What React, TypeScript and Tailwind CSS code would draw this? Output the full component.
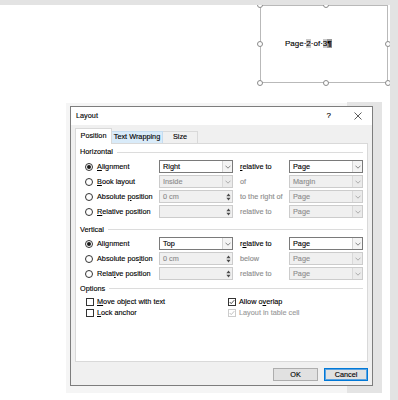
import type { ReactNode } from 'react';

const font = "font-['Liberation_Sans',Arial,sans-serif]";

function Chevron({ dim }: { dim?: boolean }) {
  return (
    <svg width="6" height="4" viewBox="0 0 6 4">
      <path d="M0.5 0.7 L3 3.2 L5.5 0.7" fill="none" stroke={dim ? '#9a9a9a' : '#6a6a6a'} strokeWidth="0.8" />
    </svg>
  );
}

function Spin() {
  return (
    <svg width="5" height="8" viewBox="0 0 5 8">
      <path d="M2.5 0.6 L4.6 3.2 L0.4 3.2 Z" fill="#4a4a4a" />
      <path d="M0.4 4.8 L4.6 4.8 L2.5 7.4 Z" fill="#4a4a4a" />
    </svg>
  );
}

function Radio({ on }: { on?: boolean }) {
  return (
    <span className="flex h-[8px] w-[8px] shrink-0 items-center justify-center rounded-full border border-[#333333] bg-white">
      {on && <span className="h-[4px] w-[4px] rounded-full bg-[#1a1a1a]" />}
    </span>
  );
}

function Field({ value, on, spin }: { value: string; on?: boolean; spin?: boolean }) {
  return (
    <div
      className={`flex h-[13px] w-[74px] shrink-0 border ${
        on ? 'border-[#7a7a7a] bg-white text-black' : 'border-[#cccccc] bg-[#f0f0f0] text-[#8c8c8c]'
      }`}
    >
      <span className="flex flex-1 items-center pl-[3px] leading-none">{value}</span>
      {spin ? (
        <span className="flex w-[8px] items-center justify-center">
          <Spin />
        </span>
      ) : (
        <span
          className={`flex w-[10px] items-center justify-center border-l ${
            on ? 'border-[#d4d4d4] bg-[#f4f4f4]' : 'border-[#d9d9d9] bg-[#ebebeb]'
          }`}
        >
          <Chevron dim={!on} />
        </span>
      )}
    </div>
  );
}

type RowProps = {
  on?: boolean;
  label: ReactNode;
  value: string;
  valueOn?: boolean;
  spin?: boolean;
  rel: ReactNode;
  relOn?: boolean;
  target: string;
  targetOn?: boolean;
};

function Row({ on, label, value, valueOn, spin, rel, relOn, target, targetOn }: RowProps) {
  return (
    <div className="flex h-[15px] items-center">
      <div className="flex w-[83px] items-center gap-[4px] pl-[9px] text-black">
        <Radio on={on} />
        <span className="whitespace-nowrap leading-none">{label}</span>
      </div>
      <Field value={value} on={valueOn} spin={spin} />
      <span className={`w-[56px] whitespace-nowrap pl-[7px] leading-none ${relOn ? 'text-black' : 'text-[#8c8c8c]'}`}>
        {rel}
      </span>
      <Field value={target} on={targetOn} />
    </div>
  );
}

function Group({ title, className }: { title: string; className: string }) {
  return (
    <div className={`flex items-center pl-[4px] pr-[4px] ${className}`}>
      <span className="leading-none text-black">{title}</span>
      <span className="ml-[4px] h-px flex-1 bg-[#dcdcdc]" />
    </div>
  );
}

function Check({ on, dim, label }: { on?: boolean; dim?: boolean; label: ReactNode }) {
  return (
    <div className={`flex items-center gap-[3px] ${dim ? 'text-[#9a9a9a]' : 'text-black'}`}>
      <span
        className={`flex h-[8px] w-[8px] shrink-0 items-center justify-center border bg-white ${
          dim ? 'border-[#cccccc]' : 'border-[#333333]'
        }`}
      >
        {on && (
          <svg width="7" height="6" viewBox="0 0 7 6">
            <path d="M0.8 3 L2.6 4.9 L6.2 0.8" fill="none" stroke={dim ? '#b0b0b0' : '#222'} strokeWidth="0.9" />
          </svg>
        )}
      </span>
      <span className="whitespace-nowrap leading-none">{label}</span>
    </div>
  );
}

const U = ({ children }: { children: ReactNode }) => <span className="underline underline-offset-1">{children}</span>;

function Handle({ x, y }: { x: number; y: number }) {
  return (
    <span
      className="absolute h-[6px] w-[6px] rounded-full border border-[#8a8a8a] bg-white"
      style={{ left: x - 3, top: y - 3 }}
    />
  );
}

export default function App() {
  return (
    <div className={`relative h-[400px] w-[398px] overflow-hidden bg-white text-[7.3px] [-webkit-text-stroke:0.12px] ${font}`}>
      {/* text box on page */}
      <div className="absolute left-[260px] top-[5px] flex h-[78px] w-[128px] items-center border border-[#b9b9b9] pl-[24px] pb-[1px] text-[8px] text-black">
        <span className="leading-none">
          Page·<span className="bg-[#c8c8c8]">2</span>·of·<span className="bg-[#c8c8c8]">3</span>
          <span className="bg-[#9a9a9a] font-bold">¶</span>
        </span>
      </div>
      <Handle x={260} y={5} />
      <Handle x={326} y={5} />
      <Handle x={260} y={44} />
      <Handle x={388} y={44} />
      <Handle x={260} y={83} />
      <Handle x={326} y={83} />
      <Handle x={388} y={83} />
      <span className="absolute left-[66px] top-[194px] h-[6px] w-[6px] rounded-full border border-[#4aa3c8] bg-white" />

      {/* window chrome around the page */}
      <div className="absolute inset-x-0 top-0 z-20 h-[5px] bg-[#e3e3e3]" />
      <div className="absolute bottom-0 right-0 top-0 z-20 w-[8px] bg-[#e3e3e3]" />

      {/* dialog shadow */}
      <div className="absolute left-[66px] top-[103px] h-[290px] w-[316px] bg-[#f5f5f5]" />
      <div className="absolute left-[347px] top-[102px] h-[291px] w-[35px] bg-[#e4e4e4]" />

      {/* Layout dialog */}
      <div className="absolute left-[70px] top-[106px] z-10 flex h-[280px] w-[303px] flex-col border border-[#7d7d7d] bg-[#f0f0f0]">
        <div className="flex h-[18px] shrink-0 items-center bg-white pl-[5px] pr-[10px] text-black">
          <span className="flex-1 leading-none">Layout</span>
          <span className="mr-[23px] text-[8px] leading-none">?</span>
          <svg width="8" height="8" viewBox="0 0 8 8">
            <path d="M0.5 0.5 L7.5 7.5 M7.5 0.5 L0.5 7.5" stroke="#333" strokeWidth="0.8" />
          </svg>
        </div>

        <div className="flex flex-1 flex-col px-[4px] pt-[3px]">
          <div className="flex h-[15px] items-end">
            <div className="relative z-10 -mb-px flex h-[16px] w-[37px] items-center justify-center border-x border-t border-[#d9d9d9] bg-white text-black">
              Position
            </div>
            <div className="flex h-[12px] w-[51px] items-center justify-center border-t border-r border-[#c5dcf0] bg-[#d9ebf9] text-black">
              Text Wrapping
            </div>
            <div className="flex h-[12px] w-[35px] items-center justify-center border-t border-r border-[#d9d9d9] text-black">
              Size
            </div>
          </div>

          <div className="flex h-[219px] flex-col border border-[#d9d9d9] bg-white">
            <Group title="Horizontal" className="mt-[2px] h-[12px]" />
            <div className="mt-px flex flex-col">
              <Row
                on
                label={<><U>A</U>lignment</>}
                value="Right"
                valueOn
                rel={<><U>r</U>elative to</>}
                relOn
                target="Page"
                targetOn
              />
              <Row label={<><U>B</U>ook layout</>} value="Inside" rel="of" target="Margin" />
              <Row label={<>Absolute <U>p</U>osition</>} value="0 cm" spin rel="to the right of" target="Page" />
              <Row label={<><U>R</U>elative position</>} value="" spin rel="relative to" target="Page" />
            </div>

            <Group title="Vertical" className="mt-[4px] h-[13px]" />
            <div className="flex flex-col">
              <Row
                on
                label="Alignment"
                value="Top"
                valueOn
                rel={<>r<U>e</U>lative to</>}
                relOn
                target="Page"
                targetOn
              />
              <Row label={<>Absolute pos<U>i</U>tion</>} value="0 cm" spin rel="below" target="Page" />
              <Row label={<>Relat<U>i</U>ve position</>} value="" spin rel="relative to" target="Page" />
            </div>

            <Group title="Options" className="mt-px h-[13px]" />
            <div className="mt-px grid grid-cols-[142px_1fr] pl-[10px]">
              <div className="flex h-[11px] items-center">
                <Check label={<><U>M</U>ove object with text</>} />
              </div>
              <div className="flex h-[11px] items-center">
                <Check on label={<>Allow o<U>v</U>erlap</>} />
              </div>
              <div className="flex h-[11px] items-center">
                <Check label={<><U>L</U>ock anchor</>} />
              </div>
              <div className="flex h-[11px] items-center">
                <Check on dim label="Layout in table cell" />
              </div>
            </div>
          </div>

          <div className="mt-[6px] flex justify-end gap-[6px]">
            <button className="flex h-[13px] w-[45px] items-center justify-center border border-[#adadad] bg-[#e1e1e1] leading-none text-black">
              OK
            </button>
            <button className="flex h-[13px] w-[44px] items-center justify-center border border-[#0078d7] bg-[#e1e1e1] leading-none text-black shadow-[inset_0_0_0_1px_#5aa2e0]">
              Cancel
            </button>
          </div>
        </div>
      </div>
    </div>
  );
}
